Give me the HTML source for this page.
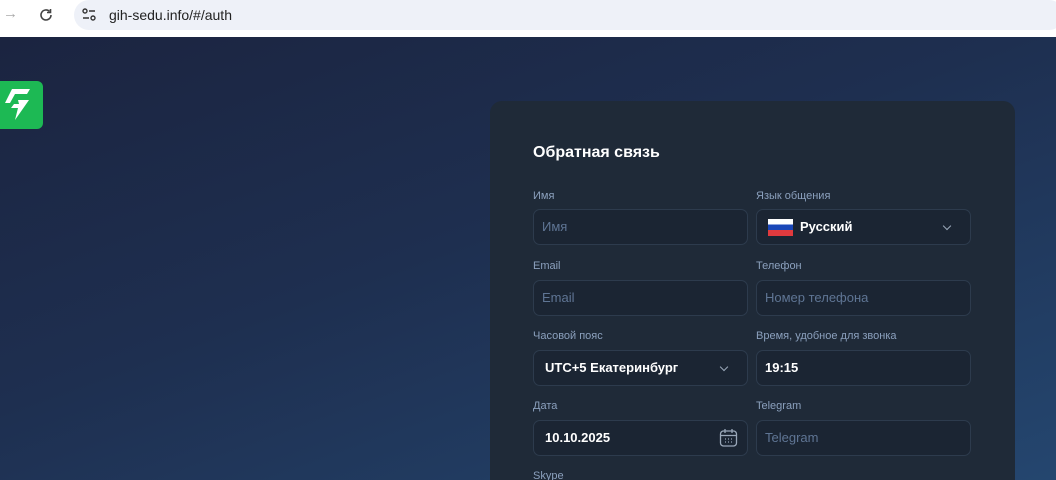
<!DOCTYPE html><html><head><meta charset="utf-8"><style>
*{box-sizing:border-box;margin:0;padding:0}
html,body{width:1056px;height:480px;overflow:hidden}
body{font-family:"Liberation Sans",sans-serif;background:#fff;position:relative}
.bar{position:absolute;left:0;top:0;width:1056px;height:30px;background:#fff}
.url{position:absolute;left:74px;top:0;width:990px;height:30px;background:#eef1f8;border-radius:15px}
.bg{position:absolute;left:0;top:37px;width:1056px;height:443px;background:linear-gradient(160deg,#1b2440 0%,#1e2f50 45%,#24466f 100%)}
.card{position:absolute;left:490px;top:101px;width:525px;height:379px;background:#1f2a38;border-radius:12px 12px 0 0}
h1{position:absolute;left:43px;top:43px;font-size:16px;color:#fff;font-weight:bold}
.lab{position:absolute;font-size:11px;color:#8ba0bd}
.in{position:absolute;width:215px;height:36px;background:#1b2533;border:1px solid #2d3b4d;border-radius:7px;font-size:13px;color:#5f7594;padding-left:8px;line-height:34px}
.v{color:#fff;font-weight:bold;padding-left:11px}
.chev{position:absolute;right:20px;top:13px;width:6px;height:6px;border-right:1.3px solid #9aa8ba;border-bottom:1.3px solid #9aa8ba;transform:rotate(45deg)}
</style></head><body>
<div class="bar"><span style="position:absolute;left:3px;top:5px;color:#aaa;font-size:15px">→</span>
<svg style="position:absolute;left:38px;top:7px" width="16" height="16" viewBox="0 0 16 16"><path d="M13 8a5 5 0 1 1-1.5-3.6" fill="none" stroke="#444" stroke-width="1.6"/><path d="M12.5 2v3.5H9" fill="none" stroke="#444" stroke-width="1.6"/></svg>
<div class="url"><svg style="position:absolute;left:7px;top:7px" width="16" height="16" viewBox="0 0 16 16"><circle cx="4" cy="4" r="2" fill="none" stroke="#333" stroke-width="1.4"/><path d="M8 4h6M2 11h6" stroke="#333" stroke-width="1.4"/><circle cx="12" cy="11" r="2" fill="none" stroke="#333" stroke-width="1.4"/></svg>
<span style="position:absolute;left:35px;top:7px;font-size:14px;color:#222">gih-sedu.info/#/auth</span></div></div>
<div class="bg"></div>
<div style="position:absolute;left:-6px;top:81px;width:49px;height:48px;background:#1db954;border-radius:6px">
<svg width="49" height="48" viewBox="0 0 49 48"><path d="M18 8h18l-3 5H21l-5 9h-5z" fill="#fff"/><path d="M24 19h11l-14 20 3-12h-7l3-4h5z" fill="#fff"/></svg></div>
<div class="card">
<h1>Обратная связь</h1>
<div class="lab" style="left:43px;top:89px">Имя</div><div class="lab" style="left:266px;top:89px">Язык общения</div>
<div class="in" style="left:43px;top:108px">Имя</div>
<div class="in v" style="left:266px;top:108px"><span style="position:absolute;left:11px;top:9px;width:25px;height:17px;background:linear-gradient(#fff 0 33%,#1a47b8 33% 66%,#e03a3e 66%)"></span><span style="padding-left:32px">Русский</span><i class="chev"></i></div>
<div class="lab" style="left:43px;top:159px">Email</div><div class="lab" style="left:266px;top:159px">Телефон</div>
<div class="in" style="left:43px;top:179px">Email</div><div class="in" style="left:266px;top:179px">Номер телефона</div>
<div class="lab" style="left:43px;top:229px">Часовой пояс</div><div class="lab" style="left:266px;top:229px">Время, удобное для звонка</div>
<div class="in v" style="left:43px;top:249px">UTC+5 Екатеринбург<i class="chev"></i></div><div class="in v" style="left:266px;top:249px;padding-left:8px">19:15</div>
<div class="lab" style="left:43px;top:299px">Дата</div><div class="lab" style="left:266px;top:299px">Telegram</div>
<div class="in v" style="left:43px;top:319px">10.10.2025<svg style="position:absolute;right:9px;top:7px" width="19" height="20" viewBox="0 0 19 20"><rect x="1.5" y="3" width="16" height="15" rx="3" fill="none" stroke="#9aa8ba" stroke-width="1.3"/><path d="M1.5 7.5h16M6 1v4M13 1v4" stroke="#9aa8ba" stroke-width="1.3"/><path d="M6 11h1M9 11h1M12 11h1M6 14h1M9 14h1M12 14h1" stroke="#9aa8ba" stroke-width="1.2"/></svg></div>
<div class="in" style="left:266px;top:319px">Telegram</div>
<div class="lab" style="left:43px;top:369px">Skype</div>
</div>
</body></html>
